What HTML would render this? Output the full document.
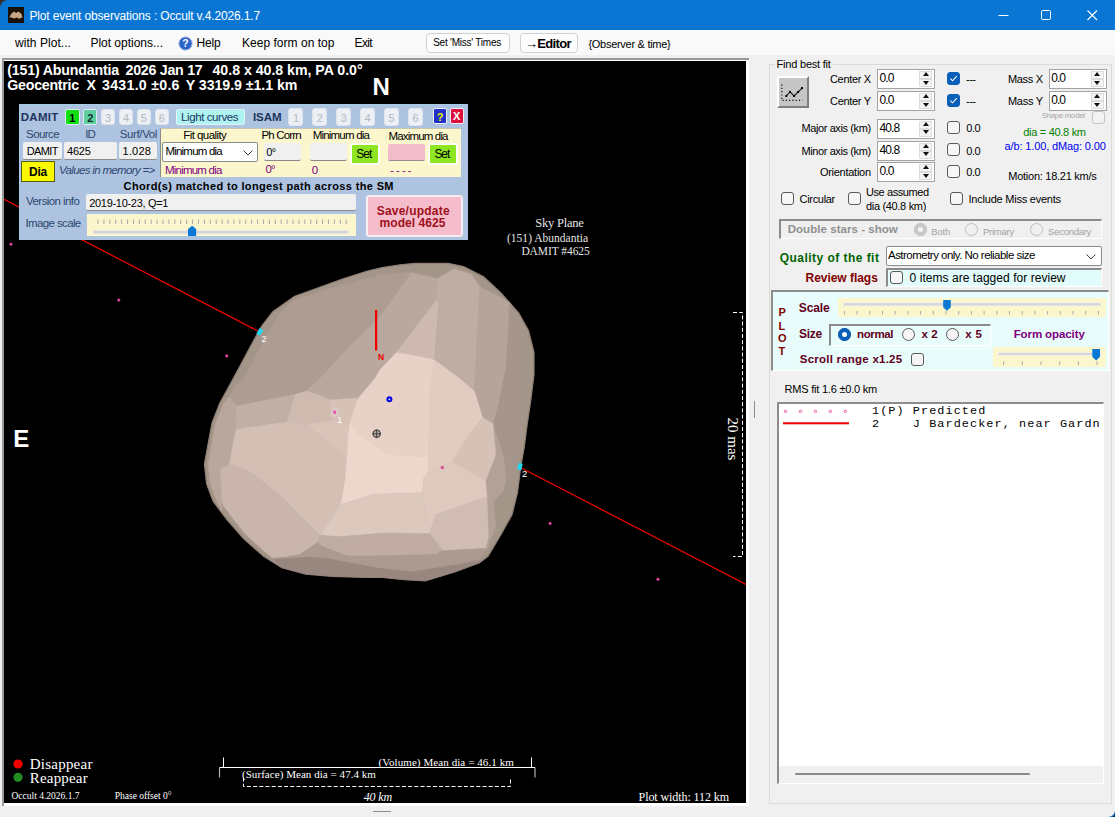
<!DOCTYPE html>
<html lang="en"><head><meta charset="utf-8"><title>Plot event observations : Occult v.4.2026.1.7</title>
<style>
html,body{margin:0;padding:0}
body{width:1115px;height:817px;position:relative;overflow:hidden;background:#f0f0f0;font-family:"Liberation Sans",Arial,sans-serif;font-size:11px;color:#000}
.t{position:absolute;white-space:pre;line-height:1}
.a{position:absolute;box-sizing:border-box}
.spin{position:absolute;box-sizing:border-box;background:#fff;border:1px solid #a3a3a3;height:20px}
.spin i{position:absolute;right:2px;width:13px;height:8px;background:#f4f4f4;border:1px solid #dcdcdc;box-sizing:border-box}
.spin i.u{top:1px}.spin i.d{bottom:1px}
.spin i:after{content:"";position:absolute;left:2.5px;border-left:3.5px solid transparent;border-right:3.5px solid transparent}
.spin i.u:after{top:0.4px;border-bottom:4px solid #111}
.spin i.d:after{top:0.8px;border-top:4px solid #111}
.cb{position:absolute;box-sizing:border-box;width:13px;height:13px;border:1px solid #5a5a5a;border-radius:3px;background:#f6f6f6}
.cb.on{background:#0a5fb8;border-color:#0a5fb8}
.cb.dis{border-color:#c4c4c4;background:#f3f3f3}
.rb{position:absolute;box-sizing:border-box;width:13px;height:13px;border:1px solid #5a5a5a;border-radius:50%;background:#f6f6f6}
.rb.dis{border-color:#bdbdbd;background:#f0f0f0}
.sunk{border-top:2px solid #8c8c8c;border-left:2px solid #8c8c8c;border-right:1px solid #fff;border-bottom:1px solid #fff}
.nb{position:absolute;box-sizing:border-box;width:15px;height:16px;border-radius:3px;background:#e6e9ee;border:1px solid #d2d6de;top:109px}
.inp{position:absolute;box-sizing:border-box;background:#f0f0f0;border-bottom:1px solid #8a8a8a;border-radius:2px}

</style></head>
<body>
<div class="a" style="left:0px;top:0px;width:1115px;height:30.4px;background:#0a76d4"></div>
<svg class="a" style="left:0;top:0" width="8" height="8" viewBox="0 0 8 8"><path d="M0 0 H7 Q1 1 0 7 Z" fill="#3a2c28"/></svg>
<svg class="a" style="left:8px;top:7px" width="16" height="16" viewBox="0 0 16 16"><rect width="16" height="16" fill="#1a1208"/><path d="M1.5 10.5 L3 7 L6 4.5 L8 6 L10.5 4.5 L13.5 7 L14.5 11 L13 10.5 L11.5 12 L9 10.5 L6 11.5 L3.5 10.5 Z" fill="#c8a884"/></svg>
<svg class="a" style="left:980px;top:0" width="135" height="30" viewBox="980 0 135 30"><path d="M998.5 15.5 H1008.5" stroke="#fff" stroke-width="1" fill="none"/><rect x="1041.5" y="10.5" width="9" height="9" rx="1" fill="none" stroke="#fff" stroke-width="1"/><path d="M1087.5 10.5 L1097 20 M1097 10.5 L1087.5 20" stroke="#fff" stroke-width="1.1" fill="none"/></svg>
<div class="a" style="left:0px;top:30px;width:1115px;height:25px;background:#f9f9f9"></div>
<svg class="a" style="left:178px;top:36px" width="15" height="15" viewBox="0 0 15 15"><circle cx="7.5" cy="7.5" r="6.6" fill="#2a62c8" stroke="#9db6e4" stroke-width="1"/><text x="7.5" y="11.3" font-size="10.5" font-weight="bold" text-anchor="middle" fill="#fff" font-family="Liberation Sans, Arial, sans-serif">?</text></svg>
<div class="a" style="left:426px;top:32.5px;width:84px;height:20.5px;background:#fdfdfd;border:1px solid #d0d0d0;border-radius:4px"></div>
<div class="a" style="left:520px;top:32.5px;width:57.5px;height:20.5px;background:#fdfdfd;border:1px solid #d0d0d0;border-radius:4px"></div>
<div class="a" style="left:2px;top:58px;width:746.8px;height:747.8px;background:#fff;border-top:2px solid #9a9a9a;border-left:2px solid #9a9a9a"></div>
<div class="a" style="left:4px;top:61px;width:742px;height:742px;background:#000"></div>
<svg class="a" style="left:4px;top:61px" width="742" height="742" viewBox="4 61 742 742">
<path d="M4 199.4 L258.5 331.3 M520 467.2 L746 584.5" stroke="#f00000" stroke-width="1.25" fill="none"/>
<polygon points="400.0,264.8 415.0,263.3 448.0,263.3 463.5,266.6 483.3,276.5 501.0,293.0 518.6,312.9 528.5,330.5 534.0,352.5 534.0,374.5 530.7,401.0 527.4,423.0 524.0,448.6 520.8,466.3 517.5,492.7 512.0,514.7 501.0,534.5 487.8,556.6 479.0,563.0 454.7,572.0 426.0,580.8 404.0,579.7 382.0,577.5 365.0,577.5 332.0,576.4 305.7,574.2 281.5,567.6 263.9,556.6 244.0,539.0 226.4,519.0 213.2,501.5 206.6,483.9 204.4,464.0 208.8,440.0 212.0,423.0 219.8,403.0 233.0,379.0 250.7,346.0 261.7,326.0 272.7,311.8 294.7,296.3 343.2,278.7 367.4,271.0 382.0,267.7" fill="#a49589" stroke="#8e7f76" stroke-width="1.2" stroke-linejoin="round"/>
<polygon points="236.7,405.9 229.0,397.0 237.0,385.0 245.0,378.0 249.4,368.2 264.1,340.3 274.4,322.6 281.7,310.9 293.5,300.6 344.9,284.4 380.0,275.0 411.6,272.7 380.0,317.0 347.8,348.5 321.4,377.0 305.8,391.2 295.5,394.5" fill="#ae9c93" stroke="#ae9c93" stroke-width="0.6" stroke-linejoin="round"/>
<polygon points="411.6,272.7 437.3,278.6 436.6,299.9 396.2,352.8 380.0,369.7 375.3,378.0 360.6,395.6 360.0,397.8 329.3,400.0 320.5,395.6 305.8,391.2 321.4,377.0 347.8,348.5 380.0,317.0" fill="#baa79d" stroke="#baa79d" stroke-width="0.6" stroke-linejoin="round"/>
<polygon points="436.6,299.9 438.8,302.1 434.7,360.1 411.6,355.0 396.2,352.8" fill="#cdb9af" stroke="#cdb9af" stroke-width="0.6" stroke-linejoin="round"/>
<polygon points="437.3,278.6 453.5,269.0 471.1,274.2 480.0,287.4 477.0,340.3 475.0,385.0 474.4,391.2 459.0,378.0 453.5,374.1 434.7,360.1 438.8,302.1 436.6,299.9" fill="#bfaca2" stroke="#bfaca2" stroke-width="0.6" stroke-linejoin="round"/>
<polygon points="471.1,274.2 481.4,287.4 509.3,302.1 509.3,319.7 506.2,367.4 500.3,396.8 492.8,423.5 482.5,417.7 474.4,391.2 475.0,385.0 477.0,340.3 480.0,287.4" fill="#b6a39a" stroke="#b6a39a" stroke-width="0.6" stroke-linejoin="round"/>
<polygon points="509.3,302.1 521.0,319.7 524.7,340.3 522.4,367.4 523.8,411.5 519.4,455.6 510.6,485.0 506.2,476.2 503.2,455.6 494.4,426.2 500.3,396.8 506.2,367.4 509.3,319.7" fill="#a6958c" stroke="#a6958c" stroke-width="0.6" stroke-linejoin="round"/>
<polygon points="492.8,423.5 503.2,455.6 506.2,476.2 503.2,490.9 492.9,502.7 495.9,526.2 487.0,549.8 485.5,548.5 488.4,536.8 486.9,497.1 485.5,480.9 495.7,454.4" fill="#b3a198" stroke="#b3a198" stroke-width="0.6" stroke-linejoin="round"/>
<polygon points="229.0,397.0 236.7,405.9 236.0,429.4 229.4,464.7 220.6,469.1 222.0,498.0 222.0,511.0 216.5,500.0 210.3,483.0 208.2,464.0 212.5,441.0 215.5,424.0 223.5,404.0" fill="#b9a79d" stroke="#b9a79d" stroke-width="0.6" stroke-linejoin="round"/>
<polygon points="236.7,405.9 295.5,394.5 286.7,422.1 236.0,429.4" fill="#c1aea4" stroke="#c1aea4" stroke-width="0.6" stroke-linejoin="round"/>
<polygon points="295.5,394.5 305.8,391.2 320.5,395.6 329.3,400.0 332.2,420.6 307.3,425.0 286.7,422.1" fill="#cfbab0" stroke="#cfbab0" stroke-width="0.6" stroke-linejoin="round"/>
<polygon points="329.3,400.0 360.0,397.8 360.6,395.6 356.2,403.0 350.3,422.1 349.9,423.5 332.2,420.6" fill="#d6c1b7" stroke="#d6c1b7" stroke-width="0.6" stroke-linejoin="round"/>
<polygon points="236.0,429.4 286.7,422.1 307.3,425.0 346.9,457.3 345.5,478.0 341.0,504.4 320.5,535.3 302.9,519.1 282.3,497.1 261.7,480.9 254.4,475.0 244.1,469.1 229.4,464.7" fill="#d4bfb5" stroke="#d4bfb5" stroke-width="0.6" stroke-linejoin="round"/>
<polygon points="307.3,425.0 332.2,420.6 349.9,423.5 348.4,433.8 347.3,454.4 346.9,457.3" fill="#dac4ba" stroke="#dac4ba" stroke-width="0.6" stroke-linejoin="round"/>
<polygon points="229.4,464.7 244.1,469.1 254.4,475.0 261.7,480.9 282.3,497.1 302.9,519.1 320.5,535.3 317.5,542.6 299.9,554.4 288.2,556.6 272.0,557.5 259.0,546.5 245.0,533.5 231.0,516.0 223.0,505.0 222.0,498.0 220.6,469.1" fill="#c9b5ac" stroke="#c9b5ac" stroke-width="0.6" stroke-linejoin="round"/>
<polygon points="375.3,378.0 380.0,369.7 396.2,352.8 411.6,355.0 434.7,360.1 431.0,378.0 428.2,457.3 388.5,454.4 359.1,435.3 350.3,422.1 356.2,403.0 360.6,395.6" fill="#e8d2c7" stroke="#e8d2c7" stroke-width="0.6" stroke-linejoin="round"/>
<polygon points="434.7,360.1 453.5,374.1 459.0,378.0 474.4,391.2 482.5,417.7 472.2,430.9 451.7,461.8 428.2,472.0 428.2,457.3 431.0,378.0" fill="#e2ccc1" stroke="#e2ccc1" stroke-width="0.6" stroke-linejoin="round"/>
<polygon points="350.3,422.1 359.1,435.3 388.5,454.4 428.2,457.3 428.2,472.0 423.8,478.0 422.3,492.7 373.8,494.2 341.0,504.4 345.5,478.0 347.3,454.4 348.4,433.8 349.9,423.5" fill="#edd7cc" stroke="#edd7cc" stroke-width="0.6" stroke-linejoin="round"/>
<polygon points="472.2,430.9 482.5,417.7 492.8,423.5 495.7,454.4 485.5,480.9 451.7,461.8" fill="#d6c1b7" stroke="#d6c1b7" stroke-width="0.6" stroke-linejoin="round"/>
<polygon points="451.7,461.8 485.5,480.9 486.9,497.1 435.5,514.7 429.6,533.8 422.3,492.7 423.8,478.0 428.2,472.0" fill="#dfc9be" stroke="#dfc9be" stroke-width="0.6" stroke-linejoin="round"/>
<polygon points="435.5,514.7 486.9,497.1 488.4,536.8 485.5,548.5 442.9,550.7 429.6,533.8" fill="#d0bcb2" stroke="#d0bcb2" stroke-width="0.6" stroke-linejoin="round"/>
<polygon points="341.0,504.4 373.8,494.2 422.3,492.7 429.6,533.8 384.1,533.1 340.0,536.8 320.5,535.3" fill="#dcc8bd" stroke="#dcc8bd" stroke-width="0.6" stroke-linejoin="round"/>
<polygon points="320.5,535.3 340.0,536.8 384.1,533.1 429.6,533.8 442.9,550.7 435.5,554.4 376.7,555.9 346.9,555.9 322.0,546.3 317.5,542.6" fill="#c0aca3" stroke="#c0aca3" stroke-width="0.6" stroke-linejoin="round"/>
<polygon points="288.0,556.6 299.9,554.4 317.5,542.6 322.0,546.3 346.9,555.9 376.7,555.9 435.5,554.4 442.9,550.7 485.5,548.5 481.0,558.0 455.0,566.0 426.0,572.0 390.0,570.0 340.0,567.0 305.0,566.0 285.0,562.0" fill="#ac9a91" stroke="#ac9a91" stroke-width="0.6" stroke-linejoin="round"/>
<polygon points="273.3,559.6 308.3,557.2 327.0,558.4 348.0,562.6 380.6,568.5 410.9,572.0 427.2,569.6 483.2,560.3 479.0,562.5 454.7,571.3 426.0,580.0 404.0,579.0 382.0,576.8 365.0,576.8 332.0,575.7 305.7,573.5 282.0,567.0" fill="#98877f" stroke="#98877f" stroke-width="0.6" stroke-linejoin="round"/>
<circle cx="11.0" cy="244.2" r="1.3" fill="#f060b0" stroke="#c02080" stroke-width="0.6"/>
<circle cx="118.8" cy="300.1" r="1.3" fill="#f060b0" stroke="#c02080" stroke-width="0.6"/>
<circle cx="226.7" cy="355.9" r="1.3" fill="#f060b0" stroke="#c02080" stroke-width="0.6"/>
<circle cx="334.5" cy="411.8" r="1.3" fill="#f060b0" stroke="#c02080" stroke-width="0.6"/>
<circle cx="442.3" cy="467.6" r="1.3" fill="#f060b0" stroke="#c02080" stroke-width="0.6"/>
<circle cx="550.1" cy="523.5" r="1.3" fill="#f060b0" stroke="#c02080" stroke-width="0.6"/>
<circle cx="658.0" cy="579.3" r="1.3" fill="#f060b0" stroke="#c02080" stroke-width="0.6"/>
<path d="M331.2 408.9 L338.2 415.9 M338.2 408.9 L331.2 415.9 M334.7 407.6 V417.2 M329.9 412.4 H339.5" stroke="#f2ecf6" stroke-width="0.7" opacity="0.85"/><circle cx="334.7" cy="412.4" r="1.5" fill="#e84cae"/>
<path d="M258.1 334.6 L261.6 329.2" stroke="#20d8f0" stroke-width="4.2" fill="none"/>
<path d="M520.6 463.3 L519.3 469.9" stroke="#20d8f0" stroke-width="4.2" fill="none"/>
<rect x="375" y="310" width="2.2" height="40.5" fill="#f00000"/>
<circle cx="389.4" cy="399.3" r="3" fill="#0808e0"/><circle cx="389.4" cy="399.3" r="0.9" fill="#f0e8ff"/>
<circle cx="376.7" cy="433.8" r="3.6" fill="#8a827c" fill-opacity="0.45" stroke="#4a4a4a" stroke-width="1.3"/><path d="M372.5 433.8 H381 M376.7 429.6 V438" stroke="#3c3c3c" stroke-width="1"/>
<path d="M733 312.5 H742.5 V556.5 H733" stroke="#fff" stroke-width="1" fill="none" stroke-dasharray="4 2.2"/>
<circle cx="18" cy="764" r="4.6" fill="#f00000"/><circle cx="18" cy="777.3" r="4.6" fill="#228b22"/>
<path d="M223.5 757.5 V767.5 M531.5 757.5 V767.5 M219.5 767.5 H535" stroke="#fff" stroke-width="1" fill="none"/>
<path d="M219.5 777.5 V767.5 M535 777.5 V767.5" stroke="#b0b0b0" stroke-width="1.2" fill="none"/>
<path d="M243.5 777.5 V786.5 H510.5 V777.5" stroke="#fff" stroke-width="1" fill="none" stroke-dasharray="4 2.2"/>
</svg>
<div class="a" style="left:19px;top:104px;width:448.5px;height:136px;background:#aec3e0;border-left:1px solid #a4cdea;border-top:1px solid #a4cdea"></div>
<div class="a" style="left:65.0px;top:109px;width:14.5px;height:16px;background:#10e010;border:1.5px solid #dfeaf2;border-radius:2px"></div>
<div class="a" style="left:82.9px;top:109px;width:14.5px;height:16px;background:#60cfa0;border:1.5px solid #dfeaf2;border-radius:2px"></div>
<div class="a" style="left:100.8px;top:108.5px;width:14.5px;height:16.5px;background:#eceff3;border:1px solid #dfe4ec;border-radius:3px"></div>
<div class="a" style="left:118.69999999999999px;top:108.5px;width:14.5px;height:16.5px;background:#eceff3;border:1px solid #dfe4ec;border-radius:3px"></div>
<div class="a" style="left:136.6px;top:108.5px;width:14.5px;height:16.5px;background:#eceff3;border:1px solid #dfe4ec;border-radius:3px"></div>
<div class="a" style="left:154.5px;top:108.5px;width:14.5px;height:16.5px;background:#eceff3;border:1px solid #dfe4ec;border-radius:3px"></div>
<div class="a" style="left:176px;top:109px;width:69px;height:15.5px;background:#aef2f2;border:1.5px solid #e0f4f8;border-radius:2px"></div>
<div class="a" style="left:288.4px;top:107.5px;width:15.0px;height:18.0px;background:#eceff3;border:1px solid #dfe4ec;border-radius:3px"></div>
<div class="a" style="left:312.29999999999995px;top:107.5px;width:15.0px;height:18.0px;background:#eceff3;border:1px solid #dfe4ec;border-radius:3px"></div>
<div class="a" style="left:336.2px;top:107.5px;width:15.0px;height:18.0px;background:#eceff3;border:1px solid #dfe4ec;border-radius:3px"></div>
<div class="a" style="left:360.09999999999997px;top:107.5px;width:15.0px;height:18.0px;background:#eceff3;border:1px solid #dfe4ec;border-radius:3px"></div>
<div class="a" style="left:384.0px;top:107.5px;width:15.0px;height:18.0px;background:#eceff3;border:1px solid #dfe4ec;border-radius:3px"></div>
<div class="a" style="left:407.9px;top:107.5px;width:15.0px;height:18.0px;background:#eceff3;border:1px solid #dfe4ec;border-radius:3px"></div>
<div class="a" style="left:433px;top:108px;width:13.5px;height:16px;background:#2030c8;border:1.5px solid #eef2f8;border-radius:2px"></div>
<div class="a" style="left:450px;top:108px;width:13.5px;height:16px;background:#e0103c;border:1.5px solid #eef2f8;border-radius:2px"></div>
<div class="inp" style="left:23.3px;top:142px;width:38.8px;height:17.5px;"></div>
<div class="inp" style="left:64.2px;top:142px;width:53.0px;height:17.5px;"></div>
<div class="inp" style="left:119.3px;top:142px;width:38.1px;height:17.5px;"></div>
<div class="a" style="left:160px;top:128px;width:301px;height:49px;background:#fbf6cc;border-left:1px solid #8a8a8a;border-top:1px solid #c8c8b0"></div>
<div class="a" style="left:162.4px;top:142.4px;width:95.9px;height:20.0px;background:#fff;border:1px solid #8a8a8a;border-radius:2px"><svg width="12" height="8" viewBox="0 0 12 8" style="position:absolute;right:3px;top:6px"><path d="M1.5 1.5 L6 6 L10.5 1.5" fill="none" stroke="#444" stroke-width="1"/></svg></div>
<div class="inp" style="left:263.7px;top:143px;width:37.6px;height:17.5px;"></div>
<div class="inp" style="left:310px;top:143px;width:37.2px;height:18px;"></div>
<div class="a" style="left:349.6px;top:142.8px;width:30.1px;height:22.4px;background:#8ee622;border:2px solid #fdfdf4;border-radius:3px"></div>
<div class="a" style="left:388.1px;top:143.7px;width:36.6px;height:17.3px;background:#f3bccb;border-bottom:1px solid #a08890;border-radius:2px"></div>
<div class="a" style="left:427.5px;top:142.8px;width:30.1px;height:22.4px;background:#8ee622;border:2px solid #fdfdf4;border-radius:3px"></div>
<div class="a" style="left:21px;top:161px;width:34px;height:21px;background:#f8f800;border:1px solid #5a5a10"></div>
<div class="inp" style="left:85.8px;top:193.6px;width:269.8px;height:17.7px;"></div>
<div class="a" style="left:87px;top:214px;width:269.2px;height:22px;background:#fbf6cc"></div>
<svg class="a" style="left:87px;top:214px" width="269.2" height="22" viewBox="0 0 269.2 22"><rect x="10.50" y="5.5" width="1" height="4.5" fill="#a8a8a8"/><rect x="16.41" y="5.5" width="1" height="4.5" fill="#a8a8a8"/><rect x="22.32" y="5.5" width="1" height="4.5" fill="#a8a8a8"/><rect x="28.23" y="5.5" width="1" height="4.5" fill="#a8a8a8"/><rect x="34.14" y="5.5" width="1" height="4.5" fill="#a8a8a8"/><rect x="40.05" y="5.5" width="1" height="4.5" fill="#a8a8a8"/><rect x="45.96" y="5.5" width="1" height="4.5" fill="#a8a8a8"/><rect x="51.87" y="5.5" width="1" height="4.5" fill="#a8a8a8"/><rect x="57.78" y="5.5" width="1" height="4.5" fill="#a8a8a8"/><rect x="63.69" y="5.5" width="1" height="4.5" fill="#a8a8a8"/><rect x="69.60" y="5.5" width="1" height="4.5" fill="#a8a8a8"/><rect x="75.51" y="5.5" width="1" height="4.5" fill="#a8a8a8"/><rect x="81.42" y="5.5" width="1" height="4.5" fill="#a8a8a8"/><rect x="87.33" y="5.5" width="1" height="4.5" fill="#a8a8a8"/><rect x="93.24" y="5.5" width="1" height="4.5" fill="#a8a8a8"/><rect x="99.15" y="5.5" width="1" height="4.5" fill="#a8a8a8"/><rect x="105.06" y="5.5" width="1" height="4.5" fill="#a8a8a8"/><rect x="110.97" y="5.5" width="1" height="4.5" fill="#a8a8a8"/><rect x="116.88" y="5.5" width="1" height="4.5" fill="#a8a8a8"/><rect x="122.79" y="5.5" width="1" height="4.5" fill="#a8a8a8"/><rect x="128.70" y="5.5" width="1" height="4.5" fill="#a8a8a8"/><rect x="134.61" y="5.5" width="1" height="4.5" fill="#a8a8a8"/><rect x="140.52" y="5.5" width="1" height="4.5" fill="#a8a8a8"/><rect x="146.43" y="5.5" width="1" height="4.5" fill="#a8a8a8"/><rect x="152.34" y="5.5" width="1" height="4.5" fill="#a8a8a8"/><rect x="158.25" y="5.5" width="1" height="4.5" fill="#a8a8a8"/><rect x="164.16" y="5.5" width="1" height="4.5" fill="#a8a8a8"/><rect x="170.07" y="5.5" width="1" height="4.5" fill="#a8a8a8"/><rect x="175.98" y="5.5" width="1" height="4.5" fill="#a8a8a8"/><rect x="181.89" y="5.5" width="1" height="4.5" fill="#a8a8a8"/><rect x="187.80" y="5.5" width="1" height="4.5" fill="#a8a8a8"/><rect x="193.71" y="5.5" width="1" height="4.5" fill="#a8a8a8"/><rect x="199.62" y="5.5" width="1" height="4.5" fill="#a8a8a8"/><rect x="205.53" y="5.5" width="1" height="4.5" fill="#a8a8a8"/><rect x="211.44" y="5.5" width="1" height="4.5" fill="#a8a8a8"/><rect x="217.35" y="5.5" width="1" height="4.5" fill="#a8a8a8"/><rect x="223.26" y="5.5" width="1" height="4.5" fill="#a8a8a8"/><rect x="229.17" y="5.5" width="1" height="4.5" fill="#a8a8a8"/><rect x="235.08" y="5.5" width="1" height="4.5" fill="#a8a8a8"/><rect x="240.99" y="5.5" width="1" height="4.5" fill="#a8a8a8"/><rect x="246.90" y="5.5" width="1" height="4.5" fill="#a8a8a8"/><rect x="252.81" y="5.5" width="1" height="4.5" fill="#a8a8a8"/><rect x="258.72" y="5.5" width="1" height="4.5" fill="#a8a8a8"/><rect x="5.9" y="16.3" width="256" height="3.6" rx="1.5" fill="#d4d4d4" stroke="#f4f4f4" stroke-width="0.8"/><path d="M101 22 V15 L105.1 11.8 L109.2 15 V22 Z" fill="#0a78d4"/></svg>
<div class="a" style="left:366px;top:195px;width:97px;height:42px;background:#f5bccb;border:2.5px solid #f6eef0;border-radius:3px"></div>
<div class="a" style="left:768.5px;top:64px;width:343.5px;height:740px;border:1px solid #dcdcd6"></div>
<div class="a" style="left:775px;top:58px;width:58px;height:14px;background:#f0f0f0"></div>
<div class="a" style="left:776.9px;top:76.3px;width:31.7px;height:31.5px;background:#c6c6c6;border-top:2px solid #fff;border-left:2px solid #fff;border-right:2px solid #7e7e7e;border-bottom:2px solid #7e7e7e"><svg width="28" height="28" viewBox="0 0 28 28" style="position:absolute;left:-0.5px;top:-0.5px"><path d="M3.8 6.5 V22.4 H24.5" fill="none" stroke="#111" stroke-width="1.2" stroke-dasharray="1.2 2.1"/><path d="M8.3 18 L12 13.9 L16.1 18 L24 10.1" fill="none" stroke="#111" stroke-width="1.1"/><rect x="7.3" y="17" width="2" height="2"/><rect x="11" y="12.9" width="2" height="2"/><rect x="15.1" y="17" width="2" height="2"/><rect x="19.1" y="13" width="2" height="2"/><rect x="23" y="9.1" width="2" height="2"/></svg></div>
<div class="spin" style="left:877px;top:69px;width:58px"><i class="u"></i><i class="d"></i></div>
<div class="spin" style="left:877px;top:91px;width:58px"><i class="u"></i><i class="d"></i></div>
<div class="spin" style="left:877px;top:118.5px;width:58px"><i class="u"></i><i class="d"></i></div>
<div class="spin" style="left:877px;top:140.5px;width:58px"><i class="u"></i><i class="d"></i></div>
<div class="spin" style="left:877px;top:162px;width:58px"><i class="u"></i><i class="d"></i></div>
<div class="spin" style="left:1049px;top:69px;width:57.5px"><i class="u"></i><i class="d"></i></div>
<div class="spin" style="left:1049px;top:91px;width:57.5px"><i class="u"></i><i class="d"></i></div>
<div class="cb on" style="left:947px;top:72px"><svg width="11" height="11" viewBox="0 0 11 11" style="position:absolute;left:0;top:0"><path d="M2.4 5.6 L4.6 7.8 L8.8 3.2" fill="none" stroke="#fff" stroke-width="1.1"/></svg></div>
<div class="cb on" style="left:947px;top:94px"><svg width="11" height="11" viewBox="0 0 11 11" style="position:absolute;left:0;top:0"><path d="M2.4 5.6 L4.6 7.8 L8.8 3.2" fill="none" stroke="#fff" stroke-width="1.1"/></svg></div>
<div class="cb " style="left:947px;top:120.5px"></div>
<div class="cb " style="left:947px;top:142.5px"></div>
<div class="cb " style="left:947px;top:164.5px"></div>
<div class="cb dis" style="left:1092px;top:111px"></div>
<div class="cb " style="left:781px;top:192px"></div>
<div class="cb " style="left:847.5px;top:192px"></div>
<div class="cb " style="left:949.5px;top:192px"></div>
<div class="a" style="left:779px;top:219px;width:322.5px;height:20px;border-top:2px solid #8c8c8c;border-left:2px solid #8c8c8c;border-right:1px solid #fff;border-bottom:1px solid #fff"></div>
<div class="rb dis" style="left:913.5px;top:223px"><div class="a" style="left:-1px;top:-1px;width:13px;height:13px;border-radius:50%;background:#c8c8c8"></div><div class="a" style="left:3px;top:3px;width:5px;height:5px;border-radius:50%;background:#f4f4f4"></div></div>
<div class="rb dis" style="left:965px;top:223px"></div>
<div class="rb dis" style="left:1030px;top:223px"></div>
<div class="a" style="left:886px;top:245.5px;width:215.5px;height:20.5px;background:#fff;border:1px solid #8a8a8a;border-radius:2px"><svg width="12" height="8" viewBox="0 0 12 8" style="position:absolute;right:4px;top:6.5px"><path d="M1.5 1.5 L6 6 L10.5 1.5" fill="none" stroke="#444" stroke-width="1"/></svg></div>
<div class="a" style="left:886px;top:268px;width:215.5px;height:18.5px;background:#e2fbfb;border-top:2px solid #8c8c8c;border-left:2px solid #8c8c8c;border-right:1px solid #fff;border-bottom:1px solid #fff"></div>
<div class="cb " style="left:890px;top:271px"></div>
<div class="a" style="left:770.5px;top:289.5px;width:338.3px;height:81.0px;background:#e9fcfc;border-top:2px solid #8c8c8c;border-left:2px solid #8c8c8c;border-bottom:1px solid #fff;border-right:1px solid #fff"></div>
<div class="a" style="left:837.5px;top:297.5px;width:268.5px;height:19.0px;background:#fbf6cc"></div>
<svg class="a" style="left:837.5px;top:297.5px" width="268.5" height="19" viewBox="0 0 268.5 19"><rect x="5.90" y="13" width="1" height="3.5" fill="#a8a8a8"/><rect x="18.60" y="13" width="1" height="3.5" fill="#a8a8a8"/><rect x="31.30" y="13" width="1" height="3.5" fill="#a8a8a8"/><rect x="44.00" y="13" width="1" height="3.5" fill="#a8a8a8"/><rect x="56.70" y="13" width="1" height="3.5" fill="#a8a8a8"/><rect x="69.40" y="13" width="1" height="3.5" fill="#a8a8a8"/><rect x="82.10" y="13" width="1" height="3.5" fill="#a8a8a8"/><rect x="94.80" y="13" width="1" height="3.5" fill="#a8a8a8"/><rect x="107.50" y="13" width="1" height="3.5" fill="#a8a8a8"/><rect x="120.20" y="13" width="1" height="3.5" fill="#a8a8a8"/><rect x="132.90" y="13" width="1" height="3.5" fill="#a8a8a8"/><rect x="145.60" y="13" width="1" height="3.5" fill="#a8a8a8"/><rect x="158.30" y="13" width="1" height="3.5" fill="#a8a8a8"/><rect x="171.00" y="13" width="1" height="3.5" fill="#a8a8a8"/><rect x="183.70" y="13" width="1" height="3.5" fill="#a8a8a8"/><rect x="196.40" y="13" width="1" height="3.5" fill="#a8a8a8"/><rect x="209.10" y="13" width="1" height="3.5" fill="#a8a8a8"/><rect x="221.80" y="13" width="1" height="3.5" fill="#a8a8a8"/><rect x="234.50" y="13" width="1" height="3.5" fill="#a8a8a8"/><rect x="247.20" y="13" width="1" height="3.5" fill="#a8a8a8"/><rect x="259.90" y="13" width="1" height="3.5" fill="#a8a8a8"/><rect x="5" y="4.6" width="258" height="3.4" rx="1.5" fill="#d6d6d6" stroke="#f6f6f6" stroke-width="0.8"/><path d="M105.2 2 H112.8 V9.2 L109 12.8 L105.2 9.2 Z" fill="#0a78d4"/></svg>
<div class="a" style="left:828.5px;top:323.5px;width:162.5px;height:22.0px;border-top:2px solid #8c8c8c;border-left:2px solid #8c8c8c;border-right:1px solid #fff;border-bottom:1px solid #fff"></div>
<div class="rb " style="left:838px;top:328px"><div class="a" style="left:-1px;top:-1px;width:13px;height:13px;border-radius:50%;background:#0a5fb8"></div><div class="a" style="left:3px;top:3px;width:5px;height:5px;border-radius:50%;background:#fff"></div></div>
<div class="rb " style="left:902px;top:328px"></div>
<div class="rb " style="left:946px;top:328px"></div>
<div class="cb " style="left:910.5px;top:353px"></div>
<div class="a" style="left:992.5px;top:347px;width:113.5px;height:19.5px;background:#fbf6cc"></div>
<svg class="a" style="left:992.5px;top:347px" width="113.5" height="19.5" viewBox="0 0 113.5 19.5"><rect x="10.10" y="14.5" width="1" height="3.5" fill="#a8a8a8"/><rect x="28.80" y="14.5" width="1" height="3.5" fill="#a8a8a8"/><rect x="47.50" y="14.5" width="1" height="3.5" fill="#a8a8a8"/><rect x="66.20" y="14.5" width="1" height="3.5" fill="#a8a8a8"/><rect x="84.90" y="14.5" width="1" height="3.5" fill="#a8a8a8"/><rect x="103.60" y="14.5" width="1" height="3.5" fill="#a8a8a8"/><rect x="5" y="5.3" width="103" height="3.4" rx="1.5" fill="#d6d6d6" stroke="#f6f6f6" stroke-width="0.8"/><path d="M99.3 2 H107 V9.8 L103.2 13.4 L99.3 9.8 Z" fill="#0a78d4"/></svg>
<div class="a" style="left:776.5px;top:401.5px;width:327.0px;height:382.0px;background:#fff;border-top:2px solid #8c8c8c;border-left:2px solid #8c8c8c;border-right:1px solid #fff;border-bottom:1px solid #fff"></div>
<div class="a" style="left:778.5px;top:766px;width:324.0px;height:16.5px;background:#f0f0f0"></div>
<div class="a" style="left:795px;top:773px;width:235px;height:2px;background:#8a8a8a;border-radius:1px"></div>
<svg class="a" style="left:780px;top:405px" width="80" height="24" viewBox="0 0 80 24"><circle cx="5.50" cy="6.4" r="1.2" fill="none" stroke="#e8409a" stroke-width="0.9"/><circle cx="20.45" cy="6.4" r="1.2" fill="none" stroke="#e8409a" stroke-width="0.9"/><circle cx="35.40" cy="6.4" r="1.2" fill="none" stroke="#e8409a" stroke-width="0.9"/><circle cx="50.35" cy="6.4" r="1.2" fill="none" stroke="#e8409a" stroke-width="0.9"/><circle cx="65.30" cy="6.4" r="1.2" fill="none" stroke="#e8409a" stroke-width="0.9"/><rect x="3" y="17.3" width="66" height="2" fill="#f00000"/></svg>
<div class="a" style="left:754px;top:401px;width:1px;height:16.5px;background:#8c8c8c"></div>
<div class="a" style="left:373px;top:810.5px;width:18px;height:1.0px;background:#8c8c8c"></div>
<svg class="a" style="left:1105px;top:807px" width="10" height="10" viewBox="0 0 10 10"><path d="M10 3.6 Q9.4 9.2 3.4 10 H10 Z" fill="#1464c8"/><path d="M10 6.5 Q9.6 9.6 6.5 10 H10 Z" fill="#0a1830"/></svg>
<div class="t" style="left:731.5px;top:439px;transform:translate(-50%,-50%) rotate(90deg);font-family:'Liberation Serif',serif;font-size:15px;color:#fff">20 mas</div>
<span class="t" style="left:29.40px;top:9.84px;font-size:12px;color:#fff;letter-spacing:-0.148px;">Plot event observations : Occult v.4.2026.1.7</span>
<span class="t" style="left:15.00px;top:36.84px;font-size:12px;letter-spacing:0.053px;">with Plot...</span>
<span class="t" style="left:90.40px;top:36.84px;font-size:12px;letter-spacing:-0.008px;">Plot options...</span>
<span class="t" style="left:196.40px;top:36.84px;font-size:12px;letter-spacing:-0.147px;">Help</span>
<span class="t" style="left:242.00px;top:36.84px;font-size:12px;letter-spacing:0.027px;">Keep form on top</span>
<span class="t" style="left:354.60px;top:36.84px;font-size:12px;letter-spacing:-0.654px;">Exit</span>
<span class="t" style="left:433.20px;top:37.94px;font-size:10px;letter-spacing:-0.238px;">Set 'Miss' Times</span>
<span class="t" style="left:524.90px;top:36.70px;font-size:13px;font-weight:bold;letter-spacing:-0.637px;">→Editor</span>
<span class="t" style="left:588.40px;top:38.69px;font-size:11px;letter-spacing:-0.278px;">{Observer &amp; time}</span>
<span class="t" style="left:7.30px;top:63.08px;font-size:14.2px;color:#fff;font-weight:bold;letter-spacing:-0.179px;">(151) Abundantia</span>
<span class="t" style="left:125.60px;top:63.08px;font-size:14.2px;color:#fff;font-weight:bold;letter-spacing:-0.262px;">2026 Jan 17</span>
<span class="t" style="left:212.50px;top:63.08px;font-size:14.2px;color:#fff;font-weight:bold;letter-spacing:-0.030px;">40.8 x 40.8 km, PA 0.0°</span>
<span class="t" style="left:7.30px;top:78.48px;font-size:14.2px;color:#fff;font-weight:bold;letter-spacing:-0.252px;">Geocentric</span>
<span class="t" style="left:86.40px;top:78.48px;font-size:14.2px;color:#fff;font-weight:bold;letter-spacing:-0.469px;">X</span>
<span class="t" style="left:102.00px;top:78.48px;font-size:14.2px;color:#fff;font-weight:bold;letter-spacing:0.267px;">3431.0 ±0.6</span>
<span class="t" style="left:185.80px;top:78.48px;font-size:14.2px;color:#fff;font-weight:bold;letter-spacing:-0.060px;">Y 3319.9 ±1.1 km</span>
<span class="t" style="left:372.40px;top:75.28px;font-size:24px;color:#fff;font-weight:bold;letter-spacing:-1.244px;">N</span>
<span class="t" style="left:13.20px;top:426.68px;font-size:24px;color:#fff;font-weight:bold;letter-spacing:-2.216px;">E</span>
<span class="t" style="left:20.80px;top:112.47px;font-size:11.5px;color:#1c3560;font-weight:bold;letter-spacing:0.236px;">DAMIT</span>
<span class="t" style="left:69.25px;top:112.69px;font-size:11px;font-weight:bold;letter-spacing:-0.125px;">1</span>
<span class="t" style="left:87.15px;top:112.69px;font-size:11px;color:#103030;font-weight:bold;letter-spacing:-0.125px;">2</span>
<span class="t" style="left:105.05px;top:112.69px;font-size:11px;color:#b4b8c0;letter-spacing:-0.125px;">3</span>
<span class="t" style="left:122.95px;top:112.69px;font-size:11px;color:#b4b8c0;letter-spacing:-0.125px;">4</span>
<span class="t" style="left:140.85px;top:112.69px;font-size:11px;color:#b4b8c0;letter-spacing:-0.125px;">5</span>
<span class="t" style="left:158.75px;top:112.69px;font-size:11px;color:#b4b8c0;letter-spacing:-0.125px;">6</span>
<span class="t" style="left:181.10px;top:112.27px;font-size:11.5px;color:#1c3560;letter-spacing:-0.410px;">Light curves</span>
<span class="t" style="left:252.90px;top:112.47px;font-size:11.5px;color:#1c3560;font-weight:bold;letter-spacing:-0.038px;">ISAM</span>
<span class="t" style="left:292.90px;top:112.89px;font-size:11px;color:#b4b8c0;letter-spacing:-0.125px;">1</span>
<span class="t" style="left:316.80px;top:112.89px;font-size:11px;color:#b4b8c0;letter-spacing:-0.125px;">2</span>
<span class="t" style="left:340.70px;top:112.89px;font-size:11px;color:#b4b8c0;letter-spacing:-0.125px;">3</span>
<span class="t" style="left:364.60px;top:112.89px;font-size:11px;color:#b4b8c0;letter-spacing:-0.125px;">4</span>
<span class="t" style="left:388.50px;top:112.89px;font-size:11px;color:#b4b8c0;letter-spacing:-0.125px;">5</span>
<span class="t" style="left:412.40px;top:112.89px;font-size:11px;color:#b4b8c0;letter-spacing:-0.125px;">6</span>
<span class="t" style="left:436.80px;top:111.69px;font-size:11px;color:#f0f000;font-weight:bold;letter-spacing:-0.534px;">?</span>
<span class="t" style="left:453.00px;top:111.29px;font-size:11px;color:#fff;font-weight:bold;letter-spacing:0.056px;">X</span>
<span class="t" style="left:26.10px;top:128.67px;font-size:11.5px;color:#2c4870;letter-spacing:-0.573px;">Source</span>
<span class="t" style="left:85.30px;top:128.67px;font-size:11.5px;color:#2c4870;letter-spacing:-0.900px;">ID</span>
<span class="t" style="left:119.80px;top:128.67px;font-size:11.5px;color:#2c4870;letter-spacing:-0.385px;">Surf/Vol</span>
<span class="t" style="left:26.80px;top:146.29px;font-size:11px;letter-spacing:-0.647px;">DAMIT</span>
<span class="t" style="left:67.00px;top:146.29px;font-size:11px;letter-spacing:-0.196px;">4625</span>
<span class="t" style="left:122.60px;top:146.29px;font-size:11px;letter-spacing:0.174px;">1.028</span>
<span class="t" style="left:183.30px;top:129.97px;font-size:11.5px;letter-spacing:-0.565px;">Fit quality</span>
<span class="t" style="left:165.40px;top:146.47px;font-size:11.5px;letter-spacing:-0.781px;">Minimum dia</span>
<span class="t" style="left:165.00px;top:164.57px;font-size:11.5px;color:#800080;letter-spacing:-0.781px;">Minimum dia</span>
<span class="t" style="left:261.50px;top:129.67px;font-size:11.5px;letter-spacing:-0.829px;">Ph Corrn</span>
<span class="t" style="left:312.70px;top:129.67px;font-size:11.5px;letter-spacing:-0.799px;">Minimum dia</span>
<span class="t" style="left:388.50px;top:130.77px;font-size:11.5px;letter-spacing:-0.836px;">Maximum dia</span>
<span class="t" style="left:266.30px;top:147.39px;font-size:11px;letter-spacing:-0.666px;">0°</span>
<span class="t" style="left:356.20px;top:148.24px;font-size:12px;letter-spacing:-0.972px;">Set</span>
<span class="t" style="left:434.40px;top:148.24px;font-size:12px;letter-spacing:-1.072px;">Set</span>
<span class="t" style="left:265.40px;top:164.17px;font-size:11.5px;color:#800080;letter-spacing:-0.700px;">0°</span>
<span class="t" style="left:311.70px;top:164.57px;font-size:11.5px;color:#800080;letter-spacing:-1.506px;">0</span>
<span class="t" style="left:390.20px;top:164.99px;font-size:11px;color:#800080;letter-spacing:-0.418px;">- - - -</span>
<span class="t" style="left:29.00px;top:166.34px;font-size:12px;font-weight:bold;letter-spacing:-0.263px;">Dia</span>
<span class="t" style="left:59.00px;top:164.57px;font-size:11.5px;color:#2c4870;font-style:italic;letter-spacing:-0.665px;">Values in memory =&gt;</span>
<span class="t" style="left:123.60px;top:180.69px;font-size:11px;font-weight:bold;letter-spacing:0.362px;">Chord(s) matched to longest path across the SM</span>
<span class="t" style="left:26.10px;top:196.47px;font-size:11.5px;color:#2c4870;letter-spacing:-0.576px;">Version info</span>
<span class="t" style="left:89.20px;top:198.39px;font-size:11px;letter-spacing:-0.299px;">2019-10-23, Q=1</span>
<span class="t" style="left:25.50px;top:217.57px;font-size:11.5px;color:#2c4870;letter-spacing:-0.629px;">Image scale</span>
<span class="t" style="left:376.70px;top:204.64px;font-size:12px;color:#a0101c;font-weight:bold;letter-spacing:0.227px;">Save/update</span>
<span class="t" style="left:379.50px;top:217.14px;font-size:12px;color:#a0101c;font-weight:bold;letter-spacing:0.073px;">model 4625</span>
<span class="t" style="left:535.20px;top:217.43px;font-size:12.5px;font-family:'Liberation Serif', 'Times New Roman', serif;color:#e4e4e4;letter-spacing:-0.207px;">Sky Plane</span>
<span class="t" style="left:507.00px;top:232.67px;font-size:11.5px;font-family:'Liberation Serif', 'Times New Roman', serif;color:#e4e4e4;letter-spacing:0.012px;">(151) Abundantia</span>
<span class="t" style="left:521.40px;top:246.47px;font-size:11.5px;font-family:'Liberation Serif', 'Times New Roman', serif;color:#e4e4e4;letter-spacing:-0.074px;">DAMIT #4625</span>
<span class="t" style="left:261.20px;top:333.96px;font-size:9.5px;color:#fff;letter-spacing:-0.497px;">2</span>
<span class="t" style="left:521.90px;top:469.26px;font-size:9.5px;color:#fff;letter-spacing:-0.497px;">2</span>
<span class="t" style="left:337.00px;top:414.96px;font-size:9.5px;color:#fff;letter-spacing:-1.297px;">1</span>
<span class="t" style="left:378.00px;top:352.60px;font-size:8.5px;color:#f00000;font-weight:bold;letter-spacing:-0.141px;">N</span>
<span class="t" style="left:29.80px;top:756.54px;font-size:15px;font-family:'Liberation Serif', 'Times New Roman', serif;color:#fff;letter-spacing:0.221px;">Disappear</span>
<span class="t" style="left:29.80px;top:770.84px;font-size:15px;font-family:'Liberation Serif', 'Times New Roman', serif;color:#fff;letter-spacing:0.182px;">Reappear</span>
<span class="t" style="left:11.50px;top:791.64px;font-size:9.5px;font-family:'Liberation Serif', 'Times New Roman', serif;color:#fff;letter-spacing:0.001px;">Occult 4.2026.1.7</span>
<span class="t" style="left:114.80px;top:791.64px;font-size:9.5px;font-family:'Liberation Serif', 'Times New Roman', serif;color:#fff;letter-spacing:-0.015px;">Phase offset 0°</span>
<span class="t" style="left:378.60px;top:756.59px;font-size:11px;font-family:'Liberation Serif', 'Times New Roman', serif;color:#fff;letter-spacing:0.082px;">(Volume) Mean dia = 46.1 km</span>
<span class="t" style="left:242.00px;top:768.69px;font-size:11px;font-family:'Liberation Serif', 'Times New Roman', serif;color:#fff;letter-spacing:0.047px;">(Surface) Mean dia = 47.4 km</span>
<span class="t" style="left:363.70px;top:791.25px;font-size:12px;font-family:'Liberation Serif', 'Times New Roman', serif;color:#fff;font-style:italic;letter-spacing:-0.140px;">40 km</span>
<span class="t" style="left:638.60px;top:791.05px;font-size:12px;font-family:'Liberation Serif', 'Times New Roman', serif;color:#fff;letter-spacing:-0.084px;">Plot width: 112 km</span>
<span class="t" style="left:776.60px;top:58.79px;font-size:11px;letter-spacing:-0.212px;">Find best fit</span>
<span class="t" style="left:830.00px;top:74.09px;font-size:11px;letter-spacing:-0.328px;">Center X</span>
<span class="t" style="left:830.00px;top:96.39px;font-size:11px;letter-spacing:-0.302px;">Center Y</span>
<span class="t" style="left:801.40px;top:123.49px;font-size:11px;letter-spacing:-0.385px;">Major axis (km)</span>
<span class="t" style="left:801.40px;top:145.79px;font-size:11px;letter-spacing:-0.385px;">Minor axis (km)</span>
<span class="t" style="left:819.90px;top:167.19px;font-size:11px;letter-spacing:-0.265px;">Orientation</span>
<span class="t" style="left:879.50px;top:71.64px;font-size:12px;letter-spacing:-0.829px;">0.0</span>
<span class="t" style="left:879.50px;top:94.34px;font-size:12px;letter-spacing:-0.829px;">0.0</span>
<span class="t" style="left:879.50px;top:121.84px;font-size:12px;letter-spacing:-0.865px;">40.8</span>
<span class="t" style="left:879.50px;top:143.84px;font-size:12px;letter-spacing:-0.865px;">40.8</span>
<span class="t" style="left:879.50px;top:165.34px;font-size:12px;letter-spacing:-0.829px;">0.0</span>
<span class="t" style="left:966.00px;top:73.69px;font-size:11px;letter-spacing:-0.500px;">---</span>
<span class="t" style="left:966.00px;top:96.39px;font-size:11px;letter-spacing:-0.500px;">---</span>
<span class="t" style="left:966.30px;top:123.49px;font-size:11px;letter-spacing:-0.432px;">0.0</span>
<span class="t" style="left:966.30px;top:145.79px;font-size:11px;letter-spacing:-0.432px;">0.0</span>
<span class="t" style="left:966.30px;top:167.19px;font-size:11px;letter-spacing:-0.432px;">0.0</span>
<span class="t" style="left:1008.00px;top:74.09px;font-size:11px;letter-spacing:-0.331px;">Mass X</span>
<span class="t" style="left:1008.00px;top:96.39px;font-size:11px;letter-spacing:-0.297px;">Mass Y</span>
<span class="t" style="left:1051.30px;top:71.64px;font-size:12px;letter-spacing:-0.996px;">0.0</span>
<span class="t" style="left:1051.30px;top:94.34px;font-size:12px;letter-spacing:-0.996px;">0.0</span>
<span class="t" style="left:1041.80px;top:112.33px;font-size:8px;color:#a8a8a8;letter-spacing:-0.387px;">Shape model</span>
<span class="t" style="left:1023.30px;top:127.39px;font-size:11px;color:#008000;letter-spacing:-0.303px;">dia = 40.8 km</span>
<span class="t" style="left:1004.50px;top:140.99px;font-size:11px;color:#0000f0;letter-spacing:-0.132px;">a/b: 1.00, dMag: 0.00</span>
<span class="t" style="left:1008.30px;top:170.99px;font-size:11px;letter-spacing:-0.263px;">Motion: 18.21 km/s</span>
<span class="t" style="left:799.50px;top:193.59px;font-size:11px;letter-spacing:-0.301px;">Circular</span>
<span class="t" style="left:866.00px;top:186.89px;font-size:11px;letter-spacing:-0.415px;">Use assumed</span>
<span class="t" style="left:866.00px;top:200.59px;font-size:11px;letter-spacing:-0.323px;">dia (40.8 km)</span>
<span class="t" style="left:968.50px;top:193.59px;font-size:11px;letter-spacing:-0.222px;">Include Miss events</span>
<span class="t" style="left:787.70px;top:223.87px;font-size:11.5px;color:#909090;font-weight:bold;letter-spacing:0.048px;">Double stars - show</span>
<span class="t" style="left:931.30px;top:226.56px;font-size:9.5px;color:#a4a4a4;letter-spacing:-0.212px;">Both</span>
<span class="t" style="left:982.90px;top:226.56px;font-size:9.5px;color:#a4a4a4;letter-spacing:-0.233px;">Primary</span>
<span class="t" style="left:1048.10px;top:226.56px;font-size:9.5px;color:#a4a4a4;letter-spacing:-0.269px;">Secondary</span>
<span class="t" style="left:779.70px;top:252.14px;font-size:12px;color:#006400;font-weight:bold;letter-spacing:0.464px;">Quality of the fit</span>
<span class="t" style="left:888.00px;top:250.27px;font-size:11.5px;letter-spacing:-0.523px;">Astrometry only. No reliable size</span>
<span class="t" style="left:805.50px;top:272.14px;font-size:12px;color:#800000;font-weight:bold;letter-spacing:-0.034px;">Review flags</span>
<span class="t" style="left:909.60px;top:272.14px;font-size:12px;letter-spacing:0.043px;">0 items are tagged for review</span>
<span class="t" style="left:778.50px;top:307.39px;font-size:11px;color:#800000;font-weight:bold;letter-spacing:-0.344px;">P</span>
<span class="t" style="left:778.50px;top:320.79px;font-size:11px;color:#800000;font-weight:bold;letter-spacing:-0.234px;">L</span>
<span class="t" style="left:778.00px;top:332.89px;font-size:11px;color:#800000;font-weight:bold;letter-spacing:-0.562px;">O</span>
<span class="t" style="left:778.50px;top:345.59px;font-size:11px;color:#800000;font-weight:bold;letter-spacing:0.266px;">T</span>
<span class="t" style="left:798.80px;top:302.44px;font-size:12px;color:#600020;font-weight:bold;letter-spacing:-0.092px;">Scale</span>
<span class="t" style="left:799.00px;top:327.84px;font-size:12px;color:#600020;font-weight:bold;letter-spacing:-0.254px;">Size</span>
<span class="t" style="left:857.10px;top:329.27px;font-size:11.5px;color:#600020;font-weight:bold;letter-spacing:-0.391px;">normal</span>
<span class="t" style="left:921.40px;top:329.27px;font-size:11.5px;color:#600020;font-weight:bold;letter-spacing:0.100px;">x 2</span>
<span class="t" style="left:965.30px;top:329.27px;font-size:11.5px;color:#600020;font-weight:bold;letter-spacing:0.300px;">x 5</span>
<span class="t" style="left:1013.70px;top:329.27px;font-size:11.5px;color:#800080;font-weight:bold;letter-spacing:-0.102px;">Form opacity</span>
<span class="t" style="left:799.80px;top:354.47px;font-size:11.5px;color:#600020;font-weight:bold;letter-spacing:0.225px;">Scroll range x1.25</span>
<span class="t" style="left:784.50px;top:384.29px;font-size:11px;letter-spacing:-0.211px;">RMS fit 1.6 ±0.0 km</span>
<span class="t" style="left:872.00px;top:406.36px;font-size:11.8px;font-family:'Liberation Mono', 'Courier New', monospace;letter-spacing:1.090px;">1(P) Predicted</span>
<span class="t" style="left:872.00px;top:419.16px;font-size:11.8px;font-family:'Liberation Mono', 'Courier New', monospace;letter-spacing:1.090px;clip-path:inset(-2px 0 -2px 0);">2    J Bardecker, near Gardn</span>
</body></html>
